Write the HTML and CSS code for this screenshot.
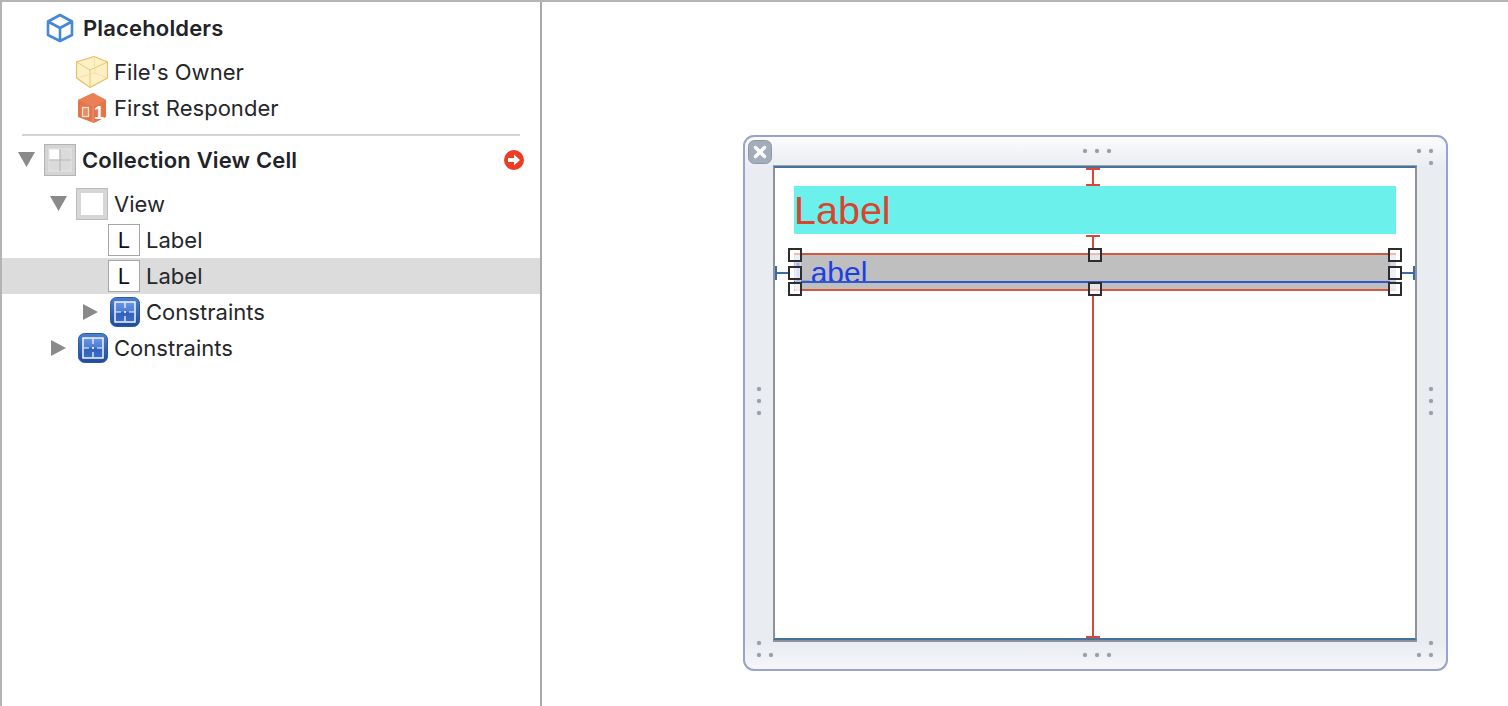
FILE: index.html
```html
<!DOCTYPE html>
<html lang="en">
<head>
    <meta charset="UTF-8">
    <title>Collection View Cell</title>
    <link rel="stylesheet" href="styles.css">
</head>
<body>
    <svg class="defs" width="0" height="0">
        <linearGradient id="constraintOuter" x1="0" y1="0" x2="0" y2="1">
            <stop offset="0" stop-color="#4d7fd0"/>
            <stop offset="1" stop-color="#1f4b9c"/>
        </linearGradient>
        <linearGradient id="constraintInner" x1="0" y1="0" x2="0" y2="1">
            <stop offset="0" stop-color="#6a97e6"/>
            <stop offset="0.5" stop-color="#4a7cd4"/>
            <stop offset="0.5" stop-color="#2f62bd"/>
            <stop offset="1" stop-color="#3a6cc6"/>
        </linearGradient>
        <symbol id="constraints" viewBox="0 0 30 30">
            <rect x="0.5" y="0.5" width="29" height="29" rx="6" fill="url(#constraintOuter)" stroke="#2a5aa6"/>
            <rect x="5" y="5" width="20" height="20" fill="url(#constraintInner)" stroke="#fff" stroke-width="1.4"/>
            <path d="M15 6v5M15 14v2M15 19v5M6 15h5M14 15h2M19 15h5" stroke="#fff" stroke-width="1.2"/>
        </symbol>
    </svg>

    <div class="page">
        <div class="outline">
            <div class="row row-bold row-place">
                <svg class="cube-blue" width="28" height="30" viewBox="0 0 28 30">
                    <path d="M14 2 26 8.500V22L14 28 2 22V8.500ZM2 8.500 14 15 26 8.500M14 15V28" fill="none" stroke="#4488d6" stroke-width="2.600" stroke-linejoin="round"/>
                </svg>
                <span>Placeholders</span>
            </div>
            <div class="row row-object">
                <svg class="icon" width="32" height="32" viewBox="0 0 32 32">
                    <path d="M18 .5 31.500 6V22L14 31.500 .5 22V6Z" fill="#fdf0c6" stroke="#e6c25f" stroke-width="1.200"/>
                    <path d="M.5 6 14 14 31.500 6M14 14V31.500" fill="none" stroke="#e9c96f" stroke-width="1"/>
                    <path d="M18 .5 19 17M.5 22 19 17 31.500 22" fill="none" stroke="#f3dfa4" stroke-width="1"/>
                </svg>
                <span>File's Owner</span>
            </div>
            <div class="row row-object">
                <svg class="icon" width="32" height="32" viewBox="0 0 32 32">
                    <path d="M17 1 30 8V25L18 31 2 25V8Z" fill="#e5744a"/>
                    <path d="M17 1 30 8 17 15 2 8Z" fill="#ea8156"/>
                    <path d="M17 15V31" stroke="#f09a74" stroke-width="1"/>
                    <rect x="6.500" y="15.500" width="6" height="9" fill="#e98c64" stroke="#fbe3d6" stroke-width="1.300"/>
                    <text x="18" y="27" class="cube-one">1</text>
                </svg>
                <span>First Responder</span>
            </div>

            <div class="divider"></div>

            <div class="row row-bold level-1 row-cell">
                <i class="arrow-down"></i>
                <svg class="icon" width="32" height="32" viewBox="0 0 32 32">
                    <rect x="0.5" y="0.5" width="31" height="31" fill="#d4d4d4" stroke="#b4b4b4"/>
                    <rect x="5" y="5" width="22" height="22" fill="#dadada" stroke="#e6e6e6"/>
                    <rect x="5.500" y="5.500" width="10" height="10" fill="#fff"/>
                    <path d="M16 5v22M5 16h22" stroke="#b9b9b9" stroke-width="1.200"/>
                </svg>
                <span>Collection View Cell</span>
                <svg class="issue" width="20" height="20" viewBox="0 0 20 20">
                    <circle cx="10" cy="10" r="10" fill="#ee3b24"/>
                    <path d="M4 8h6V4.500L16 10l-6 5.500V12H4Z" fill="#fff"/>
                </svg>
            </div>
            <div class="row level-2">
                <i class="arrow-down"></i>
                <svg class="icon" width="32" height="32" viewBox="0 0 32 32">
                    <rect x="0.5" y="0.5" width="31" height="31" fill="#d6d6d6" stroke="#bcbcbc"/>
                    <rect x="5" y="5" width="22" height="22" fill="#fff"/>
                </svg>
                <span>View</span>
            </div>
            <div class="row level-3">
                <i class="arrow-none"></i>
                <b class="label-icon">L</b>
                <span>Label</span>
            </div>
            <div class="row level-3 row-selected">
                <i class="arrow-none"></i>
                <b class="label-icon">L</b>
                <span>Label</span>
            </div>
            <div class="row level-3">
                <i class="arrow-right"></i>
                <svg class="icon" width="32" height="32" viewBox="-2 -1 32 32"><use href="#constraints" width="30" height="30"/></svg>
                <span>Constraints</span>
            </div>
            <div class="row level-2">
                <i class="arrow-right"></i>
                <svg class="icon" width="32" height="32" viewBox="-2 -1 32 32"><use href="#constraints" width="30" height="30"/></svg>
                <span>Constraints</span>
            </div>
        </div>

        <div class="canvas">
            <div class="cell-window">
                <svg class="close-btn" width="24" height="24" viewBox="0 0 24 24">
                    <rect x="0.500" y="0.500" width="23" height="23" rx="6" fill="#a3adba" stroke="#8c97a8"/>
                    <path d="M7.500 7.500 16.500 16.500M16.500 7.500 7.500 16.500" stroke="#fff" stroke-width="3.400" stroke-linecap="round"/>
                </svg>

                <div class="grip grip-row grip-top"><i></i><i></i><i></i></div>
                <div class="grip grip-row grip-bottom"><i></i><i></i><i></i></div>
                <div class="grip grip-col grip-left"><i></i><i></i><i></i></div>
                <div class="grip grip-col grip-right"><i></i><i></i><i></i></div>
                <div class="grip grip-corner corner-tr"><i></i><i></i><s></s><i></i></div>
                <div class="grip grip-corner corner-br"><s></s><i></i><i></i><i></i></div>
                <div class="grip grip-corner corner-bl"><i></i><s></s><i></i><i></i></div>

                <div class="cell-view">
                    <div class="cell-label label-top">Label</div>
                    <div class="cell-label label-bottom">Label</div>

                    <div class="baseline"></div>
                    <div class="sel-strip strip-left"></div>
                    <div class="sel-strip strip-right"></div>

                    <div class="strut strut-a cap-top cap-bottom"></div>
                    <div class="strut strut-b cap-top"></div>
                    <div class="strut strut-c cap-bottom"></div>
                    <div class="side-strut side-left"></div>
                    <div class="side-strut side-right"></div>

                    <div class="handle h-tl"></div>
                    <div class="handle h-tc"></div>
                    <div class="handle h-tr"></div>
                    <div class="handle h-ml"></div>
                    <div class="handle h-mr"></div>
                    <div class="handle h-bl"></div>
                    <div class="handle h-bc"></div>
                    <div class="handle h-br"></div>
                </div>
            </div>
        </div>
    </div>
</body>
</html>
```

FILE: styles.css
```css
html, body {
    margin: 0;
    height: 100%;
    overflow: hidden;
    background: #fff;
}
.defs {
    position: absolute;
}
.page {
    display: flex;
    height: 706px;
    box-sizing: border-box;
    border-top: 2px solid #b4b4b4;
    border-left: 2px solid #b4b4b4;
    font-family: Inter, "Liberation Sans", sans-serif;
    color: #25272a;
}

/* outline on the left */
.outline {
    width: 538px;
    flex: none;
    border-right: 2px solid #a9a9a9;
}
.row {
    display: flex;
    align-items: center;
    height: 36px;
    font-size: 22px;
    letter-spacing: 0.03px;
}
.row-bold {
    font-weight: 600;
    letter-spacing: 0.16px;
    color: #222326;
}
.row-place {
    margin-top: 8px;
    margin-bottom: 8px;
    padding-left: 44px;
}
.row-place span {
    margin-left: 9px;
}
.row-object {
    padding-left: 74px;
}
.row-object span {
    margin-left: 6px;
}
.divider {
    height: 2px;
    margin: 8px 20px 6px 20px;
    background: #d4d4d4;
}
.row-cell {
    margin-bottom: 8px;
}
.level-1 { padding-left: 16px; }
.level-2 { padding-left: 48px; }
.level-3 { padding-left: 80px; }
.level-1 span, .level-2 span, .level-3 span {
    margin-left: 6px;
}
.row-selected {
    background: #dcdcdc;
}
.icon {
    flex: none;
}
.issue {
    margin-left: auto;
    margin-right: 16px;
}
.cube-one {
    font-family: "Liberation Sans", sans-serif;
    font-size: 18px;
    font-weight: 700;
    fill: #fff;
}
.arrow-down, .arrow-right, .arrow-none {
    flex: none;
    width: 26px;
    height: 16px;
}
.arrow-down::before {
    content: "";
    display: block;
    width: 17px;
    height: 15px;
    background: #8a8a8a;
    clip-path: polygon(0 0, 100% 0, 50% 100%);
}
.arrow-right::before {
    content: "";
    display: block;
    width: 15px;
    height: 16px;
    margin-left: 1px;
    background: #8a8a8a;
    clip-path: polygon(0 0, 100% 50%, 0 100%);
}
.label-icon {
    flex: none;
    box-sizing: border-box;
    width: 32px;
    height: 32px;
    border: 1px solid #a6a6a6;
    background: #fff;
    color: #111;
    font-weight: 400;
    font-size: 22px;
    line-height: 30px;
    text-align: center;
}

/* the cell on its canvas */
.canvas {
    flex: 1;
    padding: 133px 0 0 201px;
}
.cell-window {
    position: relative;
    box-sizing: border-box;
    width: 705px;
    height: 536px;
    padding: 29px 0 0 28px;
    border: 2px solid #99a4cc;
    border-radius: 11px;
    background: linear-gradient(#fcfcfe 0, #e9ecf1 30px, #e9ecf1 505px, #f5f6f9 100%);
}
.close-btn {
    position: absolute;
    left: 3px;
    top: 3px;
}
.grip {
    position: absolute;
    display: flex;
    gap: 8px;
}
.grip i {
    display: block;
    width: 4px;
    height: 4px;
    border-radius: 50%;
    background: #9b9fa6;
    box-shadow: 0 0 1px #b0b3b8;
}
.grip-col { flex-direction: column; }
.grip-top { left: 338px; top: 12px; }
.grip-bottom { left: 338px; top: 516px; }
.grip-left { left: 12px; top: 250px; }
.grip-right { left: 684px; top: 250px; }
.grip-corner {
    display: grid;
    grid-template-columns: 4px 4px;
}
.corner-tr { left: 672px; top: 12px; }
.corner-br { left: 672px; top: 504px; }
.corner-bl { left: 12px; top: 504px; }

.cell-view {
    position: relative;
    box-sizing: border-box;
    width: 644px;
    height: 474px;
    padding: 18px 19px 0 19px;
    background: #fff;
    border: solid #8d929c;
    border-width: 0 2px;
    border-top: 2px solid #44729f;
    border-bottom: 2px solid #44729f;
    box-shadow: 0 -1px 0 #a5a5a5, 0 2px 0 #8d929c;
}
.cell-label {
    font-family: "Liberation Sans", sans-serif;
    box-sizing: border-box;
}
.label-top {
    height: 48px;
    background: #6cf0ec;
    color: #d9442e;
    font-size: 39.5px;
    line-height: 48px;
}
.label-bottom {
    height: 38px;
    margin-top: 19px;
    background: #bfbfbf;
    border-top: 2px solid #d0583f;
    border-bottom: 2px solid #d0583f;
    color: #1a3fe6;
    font-size: 30px;
    line-height: 36px;
}
.baseline {
    position: absolute;
    left: 19px;
    top: 113px;
    width: 602px;
    height: 2px;
    background: #3358c8;
}
.sel-strip {
    position: absolute;
    top: 87px;
    width: 6px;
    height: 36px;
    background: rgba(225, 225, 250, 0.7);
}
.strip-left { left: 20px; }
.strip-right { left: 615px; }

.strut {
    position: absolute;
    left: 317px;
    width: 2px;
    background: #dc4632;
}
.strut-a { top: 0; height: 18px; }
.strut-b { top: 67px; height: 14px; }
.strut-c { top: 127px; height: 343px; }
.cap-top::before, .cap-bottom::after {
    content: "";
    position: absolute;
    left: -6px;
    width: 14px;
    height: 2px;
    background: #dc4632;
}
.cap-top::before { top: 0; }
.cap-bottom::after { bottom: 0; }

.side-strut {
    position: absolute;
    top: 104px;
    width: 14px;
    height: 2px;
    background: #3d6aa8;
}
.side-left { left: 0; }
.side-right { left: 626px; }
.side-strut::before {
    content: "";
    position: absolute;
    top: -6px;
    width: 2px;
    height: 14px;
    background: #3d6aa8;
}
.side-left::before { left: 0; }
.side-right::before { right: 0; }

.handle {
    position: absolute;
    box-sizing: border-box;
    width: 14px;
    height: 14px;
    border: 2px solid #2d2d2d;
    background: rgba(255, 255, 255, 0.6);
}
.h-tl { left: 13px; top: 80px; }
.h-tc { left: 313px; top: 80px; }
.h-tr { left: 613px; top: 80px; }
.h-ml { left: 13px; top: 98px; }
.h-mr { left: 613px; top: 98px; }
.h-bl { left: 13px; top: 114px; }
.h-bc { left: 313px; top: 114px; }
.h-br { left: 613px; top: 114px; }
```
